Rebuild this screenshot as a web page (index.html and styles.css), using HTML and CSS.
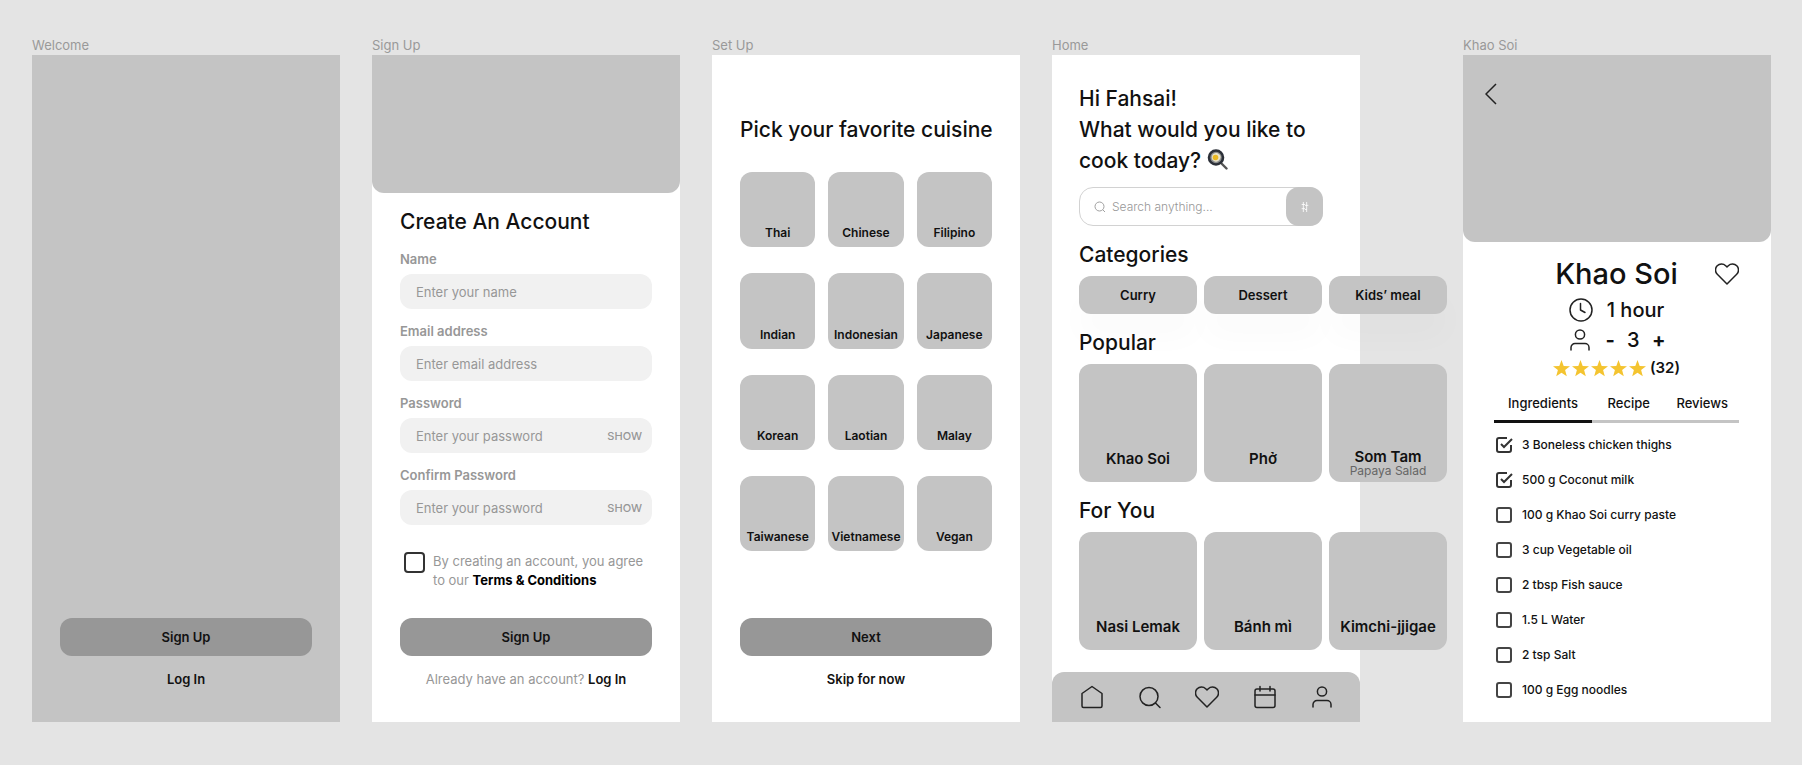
FILE: index.html
```html
<!DOCTYPE html>
<html lang="en">
<head>
    <meta charset="UTF-8">
    <meta name="viewport" content="width=device-width, initial-scale=1.0">
    <title>Recipe App Wireframes</title>
    <link rel="stylesheet" href="styles.css">
</head>
<body>
    <main class="board">

        <!-- Welcome -->
        <section class="frame">
            <h2 class="frame-name">Welcome</h2>
            <div class="screen screen-welcome">
                <div class="actions">
                    <button type="button" class="btn">Sign Up</button>
                    <p class="below"><a href="#">Log In</a></p>
                </div>
            </div>
        </section>

        <!-- Sign Up -->
        <section class="frame">
            <h2 class="frame-name">Sign Up</h2>
            <form class="screen">
                <div class="hero"></div>
                <div class="signup-body">
                    <h1 class="title">Create An Account</h1>
                    <div class="form-group">
                        <label for="name">Name</label>
                        <div class="field">
                            <input type="text" id="name" placeholder="Enter your name">
                        </div>
                    </div>
                    <div class="form-group">
                        <label for="email">Email address</label>
                        <div class="field">
                            <input type="email" id="email" placeholder="Enter email address">
                        </div>
                    </div>
                    <div class="form-group">
                        <label for="password">Password</label>
                        <div class="field">
                            <input type="password" id="password" placeholder="Enter your password">
                            <button type="button" class="show">SHOW</button>
                        </div>
                    </div>
                    <div class="form-group">
                        <label for="confirm">Confirm Password</label>
                        <div class="field">
                            <input type="password" id="confirm" placeholder="Enter your password">
                            <button type="button" class="show">SHOW</button>
                        </div>
                    </div>
                    <div class="terms">
                        <input type="checkbox" id="terms">
                        <label for="terms"><span>By creating an account, you agree</span><br><span>to our</span> <a href="#">Terms &amp; Conditions</a></label>
                    </div>
                </div>
                <div class="actions">
                    <button type="submit" class="btn">Sign Up</button>
                    <p class="below">Already have an account? <a href="#">Log In</a></p>
                </div>
            </form>
        </section>

        <!-- Set Up -->
        <section class="frame">
            <h2 class="frame-name">Set Up</h2>
            <div class="screen">
                <div class="setup-body">
                    <h1 class="title">Pick your favorite cuisine</h1>
                    <div class="cuisines">
                        <button type="button">Thai</button>
                        <button type="button">Chinese</button>
                        <button type="button">Filipino</button>
                        <button type="button">Indian</button>
                        <button type="button">Indonesian</button>
                        <button type="button">Japanese</button>
                        <button type="button">Korean</button>
                        <button type="button">Laotian</button>
                        <button type="button">Malay</button>
                        <button type="button">Taiwanese</button>
                        <button type="button">Vietnamese</button>
                        <button type="button">Vegan</button>
                    </div>
                </div>
                <div class="actions">
                    <button type="button" class="btn">Next</button>
                    <p class="below"><a href="#">Skip for now</a></p>
                </div>
            </div>
        </section>

        <!-- Home -->
        <section class="frame">
            <h2 class="frame-name">Home</h2>
            <div class="screen">
                <div class="home-body">
                    <h1 class="greeting">Hi Fahsai!<br>What would you like to cook&nbsp;today?
                        <svg class="pan" viewBox="0 0 21 21" width="21" height="21">
                            <path d="M14 14l5.500 5.500" stroke="#555" stroke-width="2.400" stroke-linecap="round"/>
                            <circle cx="9" cy="8.500" r="7" fill="#8d8f90" stroke="#2c3038" stroke-width="2.600"/>
                            <path d="M5 7c1-3 4-3.500 6-2.500s3.500 3 2 5.500-3 3-5 2.500S4 10 5 7z" fill="#e9e3c8"/>
                            <circle cx="8.500" cy="8.500" r="2.800" fill="#e9b824"/>
                        </svg>
                    </h1>
                    <div class="search">
                        <svg viewBox="0 0 24 24" width="12" height="12"><circle cx="11" cy="11" r="9"/><path d="M22 22l-4.500-4.500"/></svg>
                        <input type="search" aria-label="Search" placeholder="Search anything...">
                        <button type="button" aria-label="Filter">
                            <svg viewBox="0 0 12 14" width="10" height="12"><path d="M4 1v12M8 1v12M2 4h4M2 9h4M6 5h4M6 10h2"/></svg>
                        </button>
                    </div>

                    <h3 class="section-title">Categories</h3>
                    <div class="row pills">
                        <button type="button" class="pill">Curry</button>
                        <button type="button" class="pill">Dessert</button>
                        <button type="button" class="pill">Kids’ meal</button>
                    </div>

                    <h3 class="section-title">Popular</h3>
                    <div class="row">
                        <a href="#" class="card">Khao Soi</a>
                        <a href="#" class="card">Phở</a>
                        <a href="#" class="card card-sub">Som Tam<small>Papaya Salad</small></a>
                    </div>

                    <h3 class="section-title">For You</h3>
                    <div class="row">
                        <a href="#" class="card">Nasi Lemak</a>
                        <a href="#" class="card">Bánh mì</a>
                        <a href="#" class="card">Kimchi-jjigae</a>
                    </div>
                </div>
                <nav class="tabbar">
                    <a href="#" aria-label="Home"><svg class="icon" viewBox="0 0 24 24"><path d="M2 8.500L12 1.500l10 7V21a1.500 1.500 0 0 1-1.500 1.500h-17A1.500 1.500 0 0 1 2 21z"/></svg></a>
                    <a href="#" aria-label="Search"><svg class="icon" viewBox="0 0 24 24"><circle cx="11" cy="11.500" r="9"/><path d="M17.500 18l4.500 4.500"/></svg></a>
                    <a href="#" aria-label="Favorites"><svg class="icon" viewBox="0 0 24 24"><path d="M12 22L2.300 12.300A6 6 0 0 1 10.700 3.700L12 5l1.300-1.300a6 6 0 0 1 8.400 8.600z"/></svg></a>
                    <a href="#" aria-label="Planner"><svg class="icon" viewBox="0 0 24 24"><rect x="2" y="4" width="20" height="18.500" rx="2"/><path d="M2 10h20M7 1.500v4.500M17 1.500v4.500"/></svg></a>
                    <a href="#" aria-label="Profile"><svg class="icon" viewBox="0 0 24 24"><circle cx="12" cy="6.500" r="4.600"/><path d="M3 22v-2.500a4 4 0 0 1 4-4h10a4 4 0 0 1 4 4V22"/></svg></a>
                </nav>
            </div>
        </section>

        <!-- Recipe detail -->
        <section class="frame frame-recipe">
            <h2 class="frame-name">Khao Soi</h2>
            <div class="screen">
                <div class="hero hero-recipe">
                    <a href="#" aria-label="Back"><svg viewBox="0 0 12 22" width="12" height="22"><path d="M11 1L1 11l10 10"/></svg></a>
                </div>
                <div class="recipe-body">
                    <div class="recipe-head">
                        <h1>Khao Soi</h1>
                        <button type="button" aria-label="Save recipe"><svg class="icon" viewBox="0 0 24 24"><path d="M12 22L2.300 12.300A6 6 0 0 1 10.700 3.700L12 5l1.300-1.300a6 6 0 0 1 8.400 8.600z"/></svg></button>
                    </div>
                    <div class="meta">
                        <svg class="icon" viewBox="0 0 24 24"><circle cx="12" cy="12" r="11"/><path d="M11.500 5.500V12l4.500 2.500"/></svg>
                        <span>1 hour</span>
                    </div>
                    <div class="meta">
                        <svg class="icon" viewBox="0 0 24 24"><circle cx="12" cy="6.500" r="4.600"/><path d="M3 22v-2.500a4 4 0 0 1 4-4h10a4 4 0 0 1 4 4V22"/></svg>
                        <div class="servings">
                            <button type="button" aria-label="Fewer servings">-</button>
                            <span>3</span>
                            <button type="button" aria-label="More servings">+</button>
                        </div>
                    </div>
                    <div class="rating">
                        <svg viewBox="0 0 93 17" width="93" height="17">
                            <defs><path id="star" d="M8.500 0l2.200 5.900 6.300.3-4.900 3.900 1.700 6.100-5.300-3.500-5.300 3.500 1.700-6.100L0 6.200l6.300-.3z"/></defs>
                            <use href="#star"/><use href="#star" x="19"/><use href="#star" x="38"/><use href="#star" x="57"/><use href="#star" x="76"/>
                        </svg>
                        <span>(32)</span>
                    </div>
                    <div class="tabs" role="tablist">
                        <button type="button" role="tab" aria-selected="true">Ingredients</button>
                        <button type="button" role="tab" aria-selected="false">Recipe</button>
                        <button type="button" role="tab" aria-selected="false">Reviews</button>
                    </div>
                    <ul class="ingredients">
                        <li><label><span class="tick"><input type="checkbox" checked><svg viewBox="0 0 16 16"><path d="M15 8v5a2 2 0 0 1-2 2H3a2 2 0 0 1-2-2V3a2 2 0 0 1 2-2h8M5 7l3 3 8-8"/></svg></span>3 Boneless chicken thighs</label></li>
                        <li><label><span class="tick"><input type="checkbox" checked><svg viewBox="0 0 16 16"><path d="M15 8v5a2 2 0 0 1-2 2H3a2 2 0 0 1-2-2V3a2 2 0 0 1 2-2h8M5 7l3 3 8-8"/></svg></span>500 g Coconut milk</label></li>
                        <li><label><span class="tick"><input type="checkbox"></span>100 g Khao Soi curry paste</label></li>
                        <li><label><span class="tick"><input type="checkbox"></span>3 cup Vegetable oil</label></li>
                        <li><label><span class="tick"><input type="checkbox"></span>2 tbsp Fish sauce</label></li>
                        <li><label><span class="tick"><input type="checkbox"></span>1.5 L Water</label></li>
                        <li><label><span class="tick"><input type="checkbox"></span>2 tsp Salt</label></li>
                        <li><label><span class="tick"><input type="checkbox"></span>100 g Egg noodles</label></li>
                    </ul>
                </div>
            </div>
        </section>

    </main>
</body>
</html>
```
FILE: styles.css
```css
* {
    box-sizing: border-box;
}
body {
    margin: 0;
    background-color: #e4e4e4;
    font-family: Inter, "Open Sans", sans-serif;
    color: #111;
}
h1, h2, h3, p, ul {
    margin: 0;
    padding: 0;
    font-weight: 500;
}
ul {
    list-style: none;
}
a {
    color: inherit;
    text-decoration: none;
}
button, input {
    margin: 0;
    padding: 0;
    border: none;
    background: none;
    font: inherit;
    color: inherit;
}
button {
    cursor: pointer;
}
svg {
    display: block;
    fill: none;
}

/* Board */
.board {
    display: flex;
    gap: 32px;
    min-height: 100vh;
    padding: 35px 31px 44px 32px;
}
.frame {
    flex: 1 0 308px;
    width: 308px;
    display: flex;
    flex-direction: column;
}
.frame-recipe {
    margin-left: 71px;
}
.frame-name {
    font-size: 13px;
    font-weight: 400;
    line-height: 20px;
    color: #999;
}
.screen {
    flex: 1;
    display: flex;
    flex-direction: column;
    background-color: #fff;
}
.screen-welcome {
    background-color: #c4c4c4;
}

/* Shared parts */
.hero {
    height: 138px;
    background-color: #c4c4c4;
    border-radius: 0 0 12px 12px;
}
.title {
    font-size: 21px;
    line-height: 30px;
}
.actions {
    margin-top: auto;
    padding: 0 28px 33px;
    text-align: center;
}
.btn {
    display: block;
    width: 100%;
    height: 38px;
    background-color: #979797;
    border-radius: 12px;
    font-size: 13px;
    font-weight: 600;
}
.below {
    margin-top: 13px;
    font-size: 13px;
    font-weight: 400;
    line-height: 20px;
    color: #979797;
}
.below a {
    font-weight: 600;
    color: #111;
}
.icon {
    width: 24px;
    height: 24px;
    stroke: #222;
    stroke-width: 1.5;
    stroke-linecap: round;
    stroke-linejoin: round;
}

/* Sign Up */
.signup-body {
    padding: 14px 28px 28px;
}
.form-group {
    margin-top: 13px;
}
.form-group label {
    display: block;
    margin-bottom: 6px;
    font-size: 13px;
    font-weight: 600;
    line-height: 18px;
    color: #979797;
}
.field {
    display: flex;
    align-items: center;
    height: 35px;
    padding: 0 10px 0 16px;
    background-color: #f1f1f1;
    border-radius: 12px;
}
.field input {
    flex: 1;
    min-width: 0;
    font-size: 13px;
}
.field input::placeholder {
    color: #979797;
    opacity: 1;
}
.show {
    font-size: 11px;
    font-weight: 500;
    color: #979797;
}
.terms {
    display: flex;
    gap: 8px;
    margin-top: 27px;
    padding-left: 4px;
    font-size: 13px;
    line-height: 19px;
    color: #979797;
}
.terms input {
    flex: none;
    appearance: none;
    width: 21px;
    height: 21px;
    border: 2px solid #333;
    border-radius: 4px;
}
.terms a {
    font-weight: 700;
    color: #000;
}

/* Set Up */
.setup-body {
    padding: 60px 28px 28px;
    text-align: center;
}
.setup-body .title {
    white-space: nowrap;
}
.cuisines {
    display: grid;
    grid-template-columns: repeat(3, 1fr);
    gap: 26px 13px;
    margin-top: 27px;
}
.cuisines button {
    display: flex;
    align-items: flex-end;
    justify-content: center;
    aspect-ratio: 1;
    min-width: 0;
    padding-bottom: 6px;
    background-color: #c4c4c4;
    border-radius: 12px;
    font-size: 12px;
    font-weight: 600;
    line-height: 16px;
}

/* Home */
.home-body {
    padding: 28px 28px 21px 27px;
}
.greeting {
    font-size: 21px;
    line-height: 31px;
}
.pan {
    display: inline-block;
    vertical-align: -2px;
}
.search {
    display: flex;
    align-items: center;
    width: 244px;
    height: 39px;
    margin-top: 11px;
    padding-left: 14px;
    border: 1px solid #d2d2d2;
    border-radius: 14px;
}
.search > svg {
    stroke: #a0a0a0;
    stroke-width: 2;
}
.search input {
    flex: 1;
    min-width: 0;
    margin-left: 6px;
    font-size: 12px;
    font-weight: 300;
}
.search input::placeholder {
    color: #979797;
    opacity: 1;
}
.search button {
    display: grid;
    place-items: center;
    width: 37px;
    height: 39px;
    margin-right: -1px;
    background-color: #c4c4c4;
    border-radius: 13px;
}
.search button svg {
    stroke: #fff;
}
.section-title {
    margin: 14px 0 6px;
    font-size: 21px;
    line-height: 30px;
}
.row {
    display: flex;
    gap: 7px;
}
.pill {
    flex: 0 0 118px;
    height: 38px;
    background-color: #c4c4c4;
    border-radius: 12px;
    box-shadow: 0 24px 32px rgba(0, 0, 0, 0.02);
    font-size: 13px;
    font-weight: 600;
}
.card {
    flex: 0 0 118px;
    height: 118px;
    display: flex;
    flex-direction: column;
    align-items: center;
    justify-content: flex-end;
    padding-bottom: 14px;
    background-color: #c4c4c4;
    border-radius: 12px;
    font-size: 15px;
    font-weight: 600;
    line-height: 18px;
}
.card-sub {
    padding-bottom: 5px;
    line-height: 16px;
}
.card small {
    font-size: 12px;
    font-weight: 400;
    line-height: 12px;
    color: #666;
}
.tabbar {
    display: flex;
    align-items: center;
    justify-content: space-between;
    height: 50px;
    margin-top: auto;
    padding: 0 26px 0 28px;
    background-color: #c4c4c4;
    border-radius: 12px 12px 0 0;
}

/* Recipe detail */
.hero-recipe {
    height: 187px;
    padding: 28px 22px;
}
.hero-recipe a {
    display: inline-block;
}
.hero-recipe svg {
    stroke: #222;
    stroke-width: 1.5;
}
.recipe-body {
    padding: 14px 32px 14px 31px;
}
.recipe-head {
    display: grid;
    grid-template-columns: 24px 1fr 24px;
    align-items: center;
}
.recipe-head h1 {
    grid-column: 2;
    font-size: 29px;
    line-height: 36px;
    text-align: center;
}
.meta {
    display: flex;
    justify-content: center;
    align-items: center;
    gap: 14px;
    margin-top: 6px;
    font-size: 20px;
    font-weight: 500;
    line-height: 24px;
}
.servings {
    display: flex;
    justify-content: space-between;
    width: 60px;
}
.servings button {
    font-weight: 700;
}
.rating {
    display: flex;
    justify-content: center;
    align-items: center;
    gap: 4px;
    margin-top: 6px;
    font-size: 15px;
    font-weight: 600;
    line-height: 20px;
}
.rating svg {
    fill: #f4c430;
}
.tabs {
    display: grid;
    grid-template-columns: 4fr 3fr 3fr;
    margin-top: 15px;
}
.tabs button {
    height: 30px;
    padding-bottom: 7px;
    border-bottom: 3px solid #c4c4c4;
    font-size: 13px;
    font-weight: 500;
    line-height: 20px;
}
.tabs button[aria-selected="true"] {
    border-color: #111;
}
.ingredients {
    margin-top: 4px;
}
.ingredients label {
    display: flex;
    align-items: center;
    gap: 10px;
    height: 35px;
    padding-left: 2px;
    font-size: 12px;
    font-weight: 500;
}
.tick {
    display: grid;
    width: 16px;
    height: 16px;
}
.tick input,
.tick svg {
    grid-area: 1 / 1;
    width: 16px;
    height: 16px;
}
.tick input {
    appearance: none;
    border: 2px solid #444;
    border-radius: 3px;
}
.tick input:checked {
    border-color: transparent;
}
.tick svg {
    overflow: visible;
    stroke: #333;
    stroke-width: 2;
    pointer-events: none;
}
```
